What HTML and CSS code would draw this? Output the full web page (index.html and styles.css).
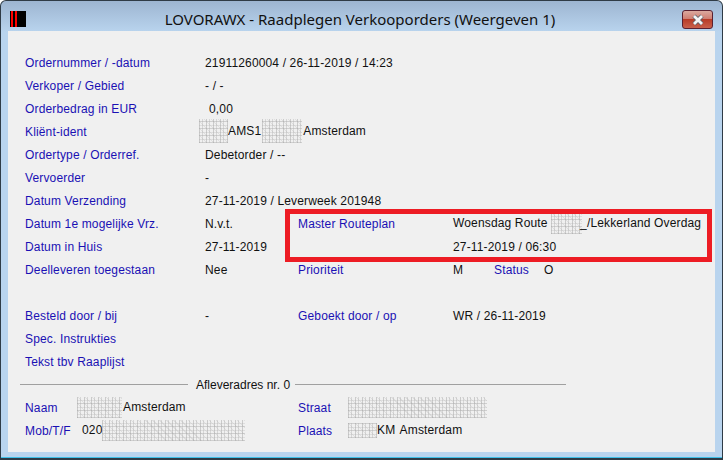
FILE: index.html
```html
<!DOCTYPE html>
<html lang="en">
<head>
    <meta charset="UTF-8">
    <title>LOVORAWX</title>
    <link rel="stylesheet" href="styles.css">
</head>
<body>
    <div class="window">
        <div class="titlebar">
            <svg class="app-icon" width="16" height="16" viewBox="0 0 16 16">
                <rect width="16" height="16" fill="#000"/>
                <rect x="1" width="2" height="16" fill="#f00"/>
                <rect x="5" width="2" height="16" fill="#f00"/>
            </svg>
            <span class="title">LOVORAWX - Raadplegen Verkooporders (Weergeven 1)</span>
            <div class="close">
                <svg width="14" height="12" viewBox="0 0 14 12">
                    <path d="M3 2 L11 10 M11 2 L3 10" stroke="#5a5f68" stroke-width="4.4" fill="none"/>
                    <path d="M3 2 L11 10 M11 2 L3 10" stroke="#f4f4f6" stroke-width="2.8" fill="none"/>
                </svg>
            </div>
        </div>
        <div class="client">
            <div class="row"><span class="label">Ordernummer / -datum</span><span class="value wide">21911260004 / 26-11-2019 / 14:23</span></div>
            <div class="row"><span class="label">Verkoper / Gebied</span><span class="value wide">- / -</span></div>
            <div class="row"><span class="label">Orderbedrag in EUR</span><span class="value wide amount">0,00</span></div>
            <div class="row">
                <span class="label">Kliënt-ident</span>
                <span class="value wide"><span class="blot first w29 tall"></span>AMS1<span class="blot second w40 tall"></span>Amsterdam</span>
            </div>
            <div class="row"><span class="label">Ordertype / Orderref.</span><span class="value wide">Debetorder / --</span></div>
            <div class="row"><span class="label">Vervoerder</span><span class="value wide">-</span></div>
            <div class="row"><span class="label">Datum Verzending</span><span class="value wide">27-11-2019 / Leverweek 201948</span></div>
            <div class="row">
                <span class="label">Datum 1e mogelijke Vrz.</span><span class="value">N.v.t.</span>
                <span class="label">Master Routeplan</span>
                <span class="value">Woensdag Route <span class="blot route w31"></span>_/Lekkerland Overdag</span>
            </div>
            <div class="row">
                <span class="label">Datum in Huis</span><span class="value">27-11-2019</span>
                <span class="label"></span><span class="value">27-11-2019 / 06:30</span>
            </div>
            <div class="row">
                <span class="label">Deelleveren toegestaan</span><span class="value">Nee</span>
                <span class="label">Prioriteit</span>
                <span class="value status-line"><span class="prio">M</span><span class="label status">Status</span>O</span>
            </div>
            <div class="row"></div>
            <div class="row">
                <span class="label">Besteld door / bij</span><span class="value">-</span>
                <span class="label">Geboekt door / op</span><span class="value">WR / 26-11-2019</span>
            </div>
            <div class="row"><span class="label">Spec. Instrukties</span></div>
            <div class="row"><span class="label">Tekst tbv Raaplijst</span></div>

            <div class="section">
                <span class="rule short"></span>
                <span class="value">Afleveradres nr. 0</span>
                <span class="rule"></span>
            </div>
            <div class="row address">
                <span class="label">Naam</span>
                <span class="value"><span class="blot naam w45"></span>Amsterdam</span>
                <span class="label">Straat</span>
                <span class="value"><span class="blot w139"></span></span>
            </div>
            <div class="row address">
                <span class="label">Mob/T/F</span>
                <span class="value phone">020<span class="blot w143"></span></span>
                <span class="label">Plaats</span>
                <span class="value plaats"><span class="blot w29 low"></span>KM&nbsp; Amsterdam</span>
            </div>

            <div class="highlight"></div>
        </div>
    </div>
</body>
</html>
```

FILE: styles.css
```css
html, body {
    margin: 0;
    padding: 0;
    background-color: white;
}

body {
    font-family: 'Liberation Sans', Arial, sans-serif;
    font-size: 12px;
    letter-spacing: 0.15px;
    color: #111;
}

.window {
    box-sizing: border-box;
    width: 723px;
    height: 460px;
    display: flex;
    flex-direction: column;
    padding: 0 7px 6px 7px;
    border: 1px solid #2f3b46;
    border-bottom-width: 2px;
    border-radius: 6px 6px 0 0;
    background: linear-gradient(to bottom, #9db5d1 0, #b9d4ee 31px, #b9d4ee 100%);
    box-shadow: inset 0 -1px 0 #3fc0e8;
}

.titlebar {
    box-sizing: border-box;
    height: 30px;
    padding-top: 5px;
    flex-shrink: 0;
    display: flex;
    align-items: center;
}

.app-icon {
    margin: 1px 0 0 2px;
}

.title {
    flex: 1;
    text-align: center;
    font-family: 'Noto Sans', sans-serif;
    font-size: 15px;
    letter-spacing: 0;
    color: #111;
    padding-left: 12px;
}

.close {
    box-sizing: border-box;
    width: 31px;
    height: 19px;
    align-self: flex-start;
    margin: 4px 2px 0 0;
    display: flex;
    align-items: center;
    justify-content: center;
    border: 1px solid #5a2030;
    border-radius: 3px;
    background: linear-gradient(to bottom, #dba99f 0, #cf7f73 45%, #b83c28 50%, #c9604c 100%);
}

.client {
    flex: 1;
    background-color: #f0f0f0;
    padding: 20px 0 0 17px;
    position: relative;
}

.row {
    display: grid;
    grid-template-columns: 180px 93px 155px 1fr;
    height: 23px;
    align-items: center;
    white-space: nowrap;
}

.row.address {
    grid-template-columns: 52px 221px 50px 1fr;
}

.label {
    color: #1a10b4;
}

.value {
    color: #111;
}

.wide {
    grid-column: 2 / 5;
}

.amount {
    padding-left: 4px;
}

.phone {
    padding-left: 5px;
}

.plaats {
    word-spacing: -1px;
}

.status-line {
    display: flex;
}

.prio {
    width: 41px;
}

.status {
    width: 50px;
}

.section {
    display: flex;
    align-items: center;
    gap: 8px;
    width: 546px;
    height: 23px;
    margin-left: -5px;
    letter-spacing: 0;
}

.section .value {
    margin-right: -3px;
}

.rule {
    flex: 1;
    height: 1px;
    background-color: #a0a0a0;
}

.rule.short {
    flex: 0 0 168px;
}

/* blanked out bits of the scan */
.blot {
    display: inline-block;
    vertical-align: middle;
    height: 21px;
    margin-top: -1px;
    background:
        repeating-linear-gradient(90deg, rgba(165, 165, 165, 0.5) 0 1px, transparent 1px 3px, rgba(175, 175, 175, 0.4) 3px 4px, transparent 4px 7px),
        repeating-linear-gradient(0deg, rgba(180, 180, 180, 0.55) 0 1px, transparent 1px 3px, rgba(195, 195, 195, 0.4) 3px 4px, transparent 4px 7px),
        repeating-linear-gradient(45deg, rgba(200, 200, 200, 0.45) 0 1px, transparent 1px 5px);
}

.blot.first {
    margin-left: -6px;
}

.blot.second {
    margin: -1px 1px 0 1px;
}

.blot.route {
    margin-right: -2px;
}

.blot.naam {
    margin-right: 1px;
}

.blot.tall {
    height: 24px;
}

.blot.low {
    height: 15px;
}

.w29 { width: 29px; }
.w31 { width: 31px; }
.w40 { width: 40px; }
.w45 { width: 45px; }
.w139 { width: 139px; }
.w143 { width: 143px; }

.highlight {
    position: absolute;
    box-sizing: border-box;
    left: 277px;
    top: 178px;
    width: 427px;
    height: 53px;
    border: 5px solid #ed1c24;
}
```
